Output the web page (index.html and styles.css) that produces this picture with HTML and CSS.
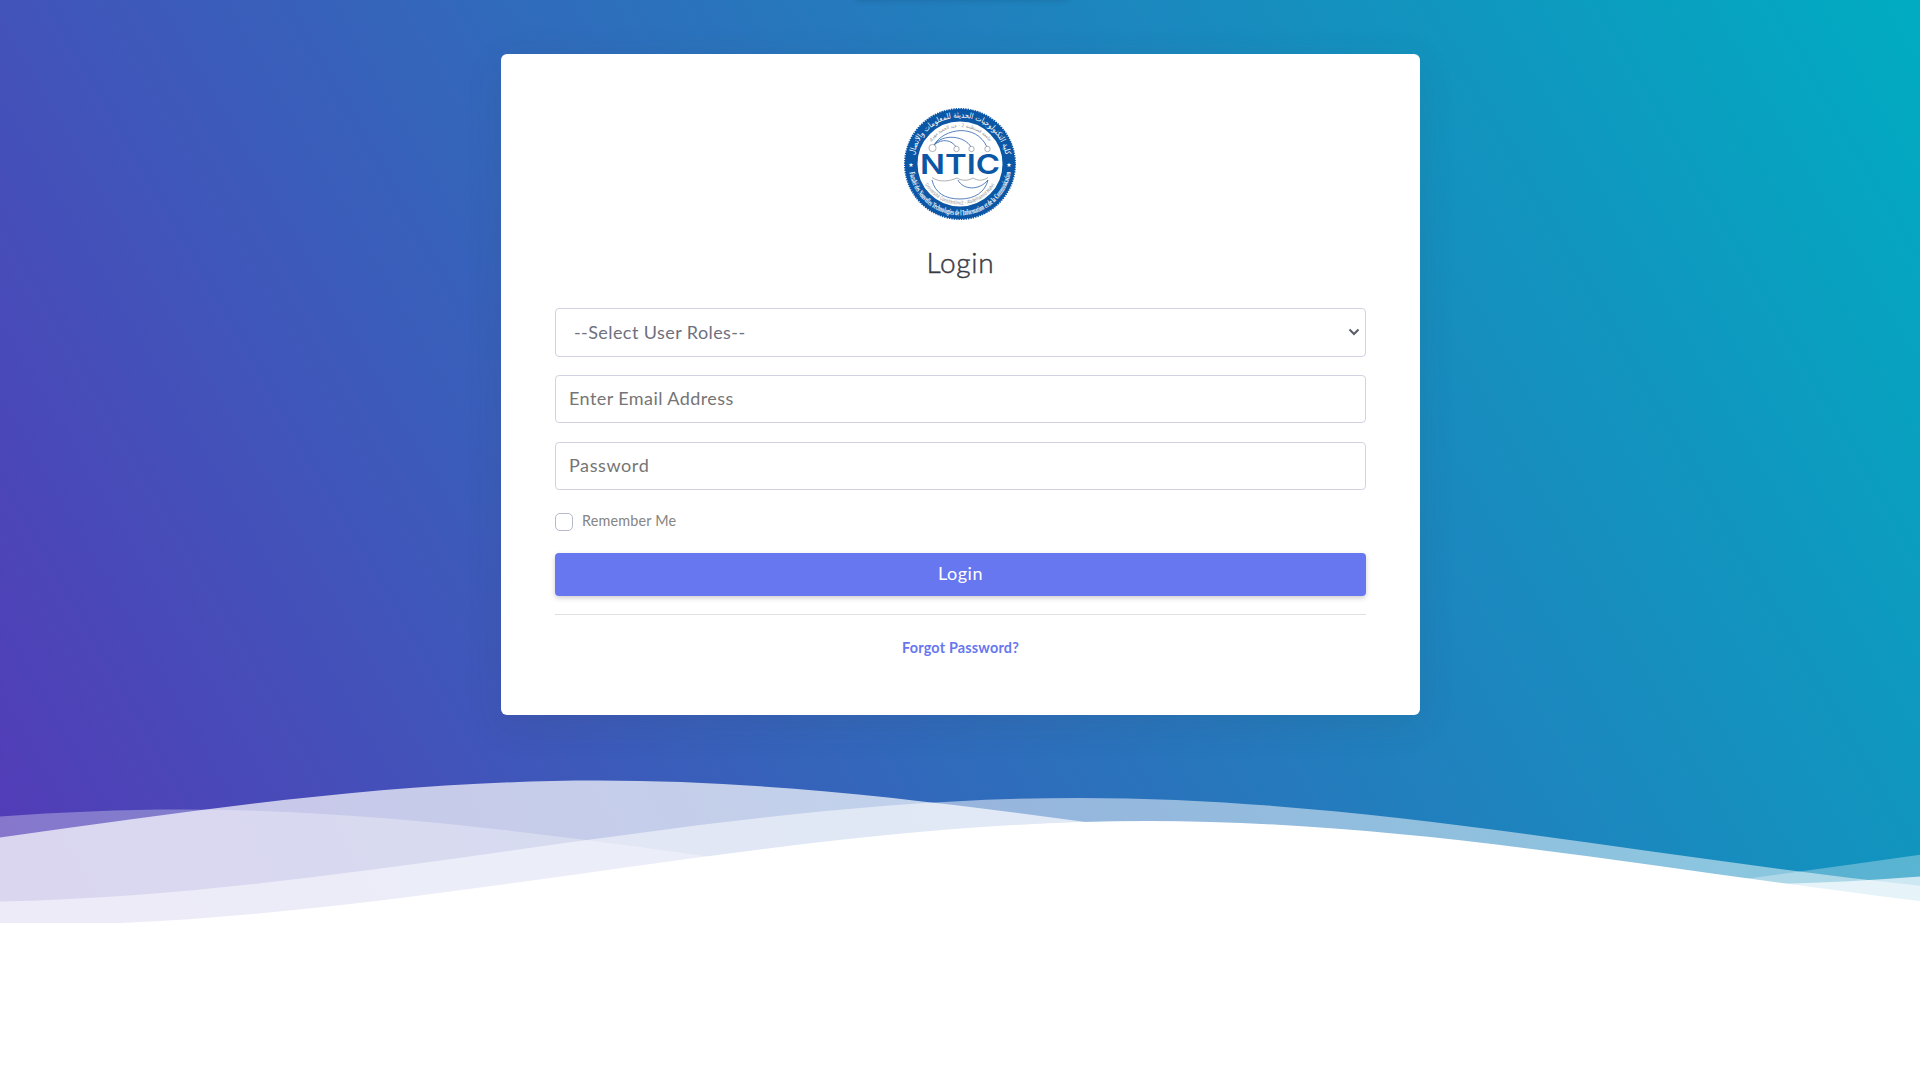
FILE: index.html
```html
<!DOCTYPE html>
<html lang="en">
<head>
<meta charset="utf-8">
<title>Login</title>
<link rel="stylesheet" href="styles.css">
</head>
<body>
<header class="header">
  <span class="top-shade"></span>
  <main class="card">
    <svg class="logo" viewBox="0 0 112 112" role="img" aria-label="NTIC">
      <defs>
        <path id="arc-top" d="M9.500 56a46.500 46.500 0 0 1 93 0v6"/>
        <path id="arc-bottom" d="M4.700 56a51.300 51.300 0 0 0 102.600 0"/>
        <path id="arc-top-in" d="M19 56a37 37 0 0 1 74 0"/>
        <path id="arc-bottom-in" d="M15.500 56a40.500 40.500 0 0 0 81 0"/>
      </defs>
      <circle class="seal-teeth" cx="56" cy="56" r="55"/>
      <circle class="seal-ring" cx="56" cy="56" r="48.500"/>
      <text class="ring-text ring-text-ar"><textPath href="#arc-top" startOffset="48%" textLength="128" lengthAdjust="spacingAndGlyphs">كلية التكنولوجيات الحديثة للمعلومات والاتصال</textPath></text>
      <text class="ring-text ring-text-fr"><textPath href="#arc-bottom" startOffset="50%" textLength="144" lengthAdjust="spacingAndGlyphs">Faculté des Nouvelles Technologies de l'Information et de la Communication</textPath></text>
      <text class="inner-text"><textPath href="#arc-top-in" startOffset="50%" textLength="68" lengthAdjust="spacingAndGlyphs">جامعة قسنطينة 2 - عبد الحميد مهري</textPath></text>
      <text class="inner-text"><textPath href="#arc-bottom-in" startOffset="50%" textLength="84" lengthAdjust="spacingAndGlyphs">Université Constantine2 - Abdelhamid Mehri</textPath></text>
      <text class="star" x="7" y="58.500">★</text>
      <text class="star" x="105" y="58.500">★</text>
      <g class="line-blue">
        <path d="M30 37C40 20 72 15 83 39M30 37C39 25 61 28 67 39M30 37C38 30 48 32 52 39"/>
        <path d="M28 72C31 85 41 91 56 91S81 84 84 72M54 72C59 82 75 83 84 72"/>
      </g>
      <g class="line-gray">
        <circle cx="28.500" cy="40" r="3.600"/><circle cx="52.500" cy="41" r="2.700"/><circle cx="67.500" cy="41" r="2.700"/><circle cx="83.500" cy="41" r="2.700"/>
        <path d="M28 69.500C36 75 46 73 53 70C58 73 64 73 69 70C74 73 79 73 84 69.500"/>
      </g>
      <text class="logo-word" x="56" y="66.300" textLength="80" lengthAdjust="spacingAndGlyphs">NTIC</text>
    </svg>
    <h1 class="title">Login</h1>
    <form class="form">
      <div class="field select"><span class="select-text">--Select User Roles--</span>
        <svg class="chevron" viewBox="0 0 12 8"><path d="M1.500 1.500 6 6l4.500-4.500"/></svg>
      </div>
      <input class="field email" type="email" placeholder="Enter Email Address">
      <input class="field password" type="password" placeholder="Password">
      <label class="remember"><span class="box"></span><span>Remember Me</span></label>
      <button class="submit" type="button">Login</button>
    </form>
    <hr class="rule">
    <a class="forgot" href="#">Forgot Password?</a>
  </main>
  <svg class="waves" viewBox="0 24 150 28" preserveAspectRatio="none">
    <defs>
      <path id="wave" d="M-160 44c30 0 58-18 88-18s58 18 88 18 58-18 88-18 58 18 88 18v44h-352z"/>
    </defs>
    <use href="#wave" x="118.700" y="0" fill="rgba(255,255,255,.7)"/>
    <use href="#wave" x="-19.700" y="3" fill="rgba(255,255,255,.5)"/>
    <use href="#wave" x="86.200" y="5" fill="rgba(255,255,255,.3)"/>
    <use href="#wave" x="-14.300" y="7" fill="#fff"/>
  </svg>
</header>
</body>
</html>
```
FILE: styles.css
```css
* { box-sizing: border-box; }
html, body { margin: 0; height: 100%; }
body {
  background: #fff;
  font-family: "Lato", "Liberation Sans", sans-serif;
  color: #858796;
  overflow: hidden;
}
.header {
  position: relative;
  height: 923px;
  padding-top: 54px;
  overflow: hidden;
  display: flex;
  flex-direction: column;
  align-items: center;
  background: linear-gradient(60deg, rgb(84, 58, 183) 0%, rgb(0, 172, 193) 100%);
}
.top-shade {
  position: absolute;
  top: -11px;
  left: 856px;
  width: 212px;
  height: 10px;
  box-shadow: 0 0 7px rgba(0, 0, 0, .2);
}
.card {
  width: 919px;
  height: 661px;
  margin-left: 1px;
  padding: 54px;
  display: flex;
  flex-direction: column;
  align-items: center;
  background: #fff;
  border-radius: 6px;
  box-shadow: 0 9px 36px rgba(58, 59, 69, .12);
}
.logo { width: 112px; height: 112px; margin-right: 1px; display: block; }
.seal-teeth { fill: #0b57a6; stroke: #0b57a6; stroke-width: 2; stroke-dasharray: 1.400 1; }
.seal-ring { fill: #fff; stroke: #0b57a6; stroke-width: 12; }
.ring-text { fill: #fff; text-anchor: middle; }
.ring-text-ar { font: 8px "DejaVu Sans", sans-serif; }
.ring-text-fr { font: bold 8px "Liberation Serif", serif; }
.inner-text { fill: #8b8f94; font: 5px "DejaVu Sans", sans-serif; text-anchor: middle; }
.star { fill: #fff; font: 6px "DejaVu Sans", sans-serif; text-anchor: middle; }
.line-blue { fill: none; stroke: #2d62ae; stroke-width: .8; }
.line-gray { fill: none; stroke: #9a9da2; stroke-width: .8; }
.logo-word { fill: #0b57a6; font: 600 27px "Inter", sans-serif; text-anchor: middle; }
.title {
  margin: 25px 0 29px;
  font-size: 28px;
  line-height: 34px;
  font-weight: 300;
  letter-spacing: .7px;
  color: #3a3b45;
  -webkit-text-stroke: .45px #3a3b45;
}
.form { width: 100%; display: flex; flex-direction: column; }
.field {
  width: 100%;
  height: 48px;
  padding: 0 13px 2px;
  border: 1px solid #d1d3e2;
  border-radius: 4px;
  background: #fff;
  font: 18px "Lato", sans-serif;
  letter-spacing: .42px;
  color: #6e707e;
}
.field::placeholder { color: #757575; opacity: 1; }
.select {
  height: 49px;
  margin-bottom: 18px;
  padding: 0 5px 1px 18px;
  display: flex;
  align-items: center;
  justify-content: space-between;
}
.chevron { width: 12px; height: 8px; fill: none; stroke: #5a5c69; stroke-width: 2; }
.email { margin-bottom: 19px; }
.password { letter-spacing: .6px; }
.remember {
  margin-top: 20px;
  height: 24px;
  display: flex;
  gap: 9px;
  font-size: 14.400px;
  line-height: 22px;
  letter-spacing: .17px;
  color: #858585;
}
.box { width: 18px; height: 18px; margin-top: 3px; border: 1px solid #b7b9cc; border-radius: 5px; }
.submit {
  margin-top: 19px;
  height: 43px;
  padding: 0 0 3px;
  border: 0;
  border-radius: 4px;
  background: #6777ef;
  box-shadow: 0 2px 5px rgba(58, 59, 69, .25);
  font: 18px "Lato", sans-serif;
  letter-spacing: .5px;
  color: #fff;
}
.rule { width: 100%; margin: 18px 0; border: 0; border-top: 1px solid rgba(0, 0, 0, .12); }
.forgot { margin-top: 5px; font-size: 14.400px; line-height: 20px; font-weight: 700; letter-spacing: .2px; color: #6777ef; text-decoration: none; }
.waves { position: absolute; left: 0; bottom: -8px; width: 100%; height: 162px; }
```
